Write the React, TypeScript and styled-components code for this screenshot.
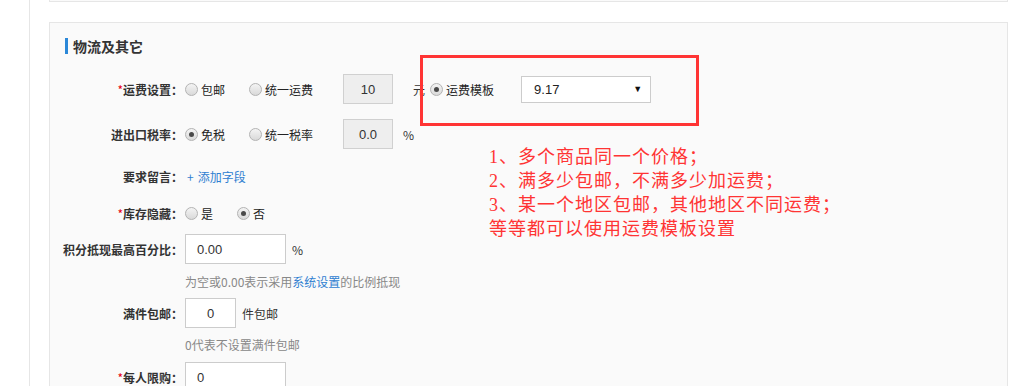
import styled, { createGlobalStyle } from 'styled-components';

const GlobalStyle = createGlobalStyle`
  html, body {
    margin: 0;
    padding: 0;
    background: #fff;
  }
  body {
    font-family: "Liberation Sans", "Noto Sans CJK SC", sans-serif;
    font-size: 12px;
    color: #333;
  }
`;

const Page = styled.div`
  position: relative;
  height: 386px;
  overflow: hidden;
  box-sizing: border-box;
  margin-left: 29px;
  border-left: 1px solid #e6e6e6;
  padding-left: 19px;
  width: 999px;
`;

const TopPanel = styled.div`
  width: 959px;
  height: 2px;
  box-sizing: border-box;
  border: 1px solid #e6e6e6;
  border-top: none;
  background: #fafafa;
`;

const Panel = styled.section`
  margin-top: 20px;
  width: 959px;
  height: 400px;
  box-sizing: border-box;
  border: 1px solid #e6e6e6;
  background: #fafafa;
  padding: 15px 0 0 15px;
`;

const Heading = styled.h3`
  margin: 0;
  height: 16px;
  line-height: 16px;
  border-left: 3px solid #2b88d8;
  padding-left: 5px;
  font-size: 14px;
  font-weight: bold;
  color: #333;
  font-family: "Noto Sans CJK SC", sans-serif;
`;

const Row = styled.div<{ $top: number }>`
  display: flex;
  align-items: center;
  min-height: 30px;
  margin-top: ${(p) => p.$top}px;
  margin-left: -15px;
`;

const Label = styled.div`
  width: 133px;
  flex: none;
  text-align: right;
  font-weight: bold;
  color: #333;
  font-family: "Noto Sans CJK SC", sans-serif;
  padding-right: 2px;
`;

const Star = styled.span`
  color: #e60012;
  font-weight: normal;
`;

const Option = styled.label<{ $after?: number; $before?: number }>`
  display: inline-flex;
  align-items: center;
  gap: 3px;
  margin-left: ${(p) => p.$before ?? 0}px;
  margin-right: ${(p) => p.$after ?? 24}px;
  color: #222;
  font-family: "Noto Sans CJK SC", sans-serif;
`;

const Radio = styled.span<{ $checked?: boolean }>`
  width: 13px;
  height: 13px;
  box-sizing: border-box;
  border-radius: 50%;
  border: 1px solid #b3b3b3;
  background: linear-gradient(#f4f4f4, #d9d9d9);
  display: inline-flex;
  align-items: center;
  justify-content: center;

  &::after {
    content: '';
    width: 5px;
    height: 5px;
    border-radius: 50%;
    background: #4a4a4a;
    display: ${(p) => (p.$checked ? 'block' : 'none')};
  }
`;

const Input = styled.div<{ $w: number; $disabled?: boolean; $center?: boolean; $before?: number }>`
  width: ${(p) => p.$w}px;
  height: 30px;
  box-sizing: border-box;
  border: 1px solid ${(p) => (p.$disabled ? '#d0d0d0' : '#cccccc')};
  background: ${(p) => (p.$disabled ? '#eeeeee' : '#fff')};
  margin-left: ${(p) => p.$before ?? 0}px;
  display: flex;
  align-items: center;
  justify-content: ${(p) => (p.$center ? 'center' : 'flex-start')};
  padding-left: ${(p) => (p.$center ? 0 : 11)}px;
  font-size: 13px;
  color: #333;
`;

const Unit = styled.span<{ $before: number }>`
  margin-left: ${(p) => p.$before}px;
  color: #333;
  font-family: "Noto Sans CJK SC", sans-serif;
`;

const Select = styled.div`
  width: 130px;
  height: 27px;
  box-sizing: border-box;
  border: 1px solid #cccccc;
  background: #fff;
  margin-left: 3px;
  display: flex;
  align-items: center;
  justify-content: space-between;
  padding: 0 8px 0 12px;
  font-size: 13px;
  color: #222;
`;

const Caret = styled.span`
  font-size: 9px;
  color: #111;
`;

const AddLink = styled.a`
  color: #2f80d1;
  text-decoration: none;
  font-family: "Noto Sans CJK SC", sans-serif;
  margin-left: 2px;
  font-size: 12px;

  b {
    font-weight: normal;
    margin-right: 4px;
  }
`;

const Help = styled.div<{ $top: number }>`
  margin-top: ${(p) => p.$top}px;
  margin-left: 120px;
  height: 16px;
  line-height: 16px;
  color: #888;
  font-family: "Noto Sans CJK SC", sans-serif;

  a {
    color: #2f80d1;
    text-decoration: none;
  }
`;

const NoteBox = styled.div`
  position: absolute;
  left: 390px;
  top: 55px;
  width: 279px;
  height: 71px;
  box-sizing: border-box;
  border: 3px solid #ff3434;
  pointer-events: none;
`;

const NoteText = styled.div`
  position: absolute;
  left: 459px;
  top: 145px;
  color: #ff3434;
  font-size: 18px;
  line-height: 24px;
  letter-spacing: 1px;
  font-family: "Liberation Serif", "Noto Sans CJK SC", serif;
  white-space: nowrap;
`;

export default function App() {
  return (
    <>
      <GlobalStyle />
      <Page>
        <TopPanel />
        <Panel>
          <Heading>物流及其它</Heading>

          <Row $top={20}>
            <Label><Star>*</Star>运费设置：</Label>
            <Option><Radio />包邮</Option>
            <Option><Radio />统一运费</Option>
            <Input $w={50} $disabled $center $before={6}>10</Input>
            <Unit $before={20}>元</Unit>
            <Option $before={5}><Radio $checked />运费模板</Option>
            <Select>
              <span>9.17</span>
              <Caret>▼</Caret>
            </Select>
          </Row>

          <Row $top={15}>
            <Label>进出口税率：</Label>
            <Option><Radio $checked />免税</Option>
            <Option><Radio />统一税率</Option>
            <Input $w={50} $disabled $center $before={6}>0.0</Input>
            <Unit $before={10}>%</Unit>
          </Row>

          <Row $top={12}>
            <Label>要求留言：</Label>
            <AddLink href="#"><b>+</b>添加字段</AddLink>
          </Row>

          <Row $top={7}>
            <Label><Star>*</Star>库存隐藏：</Label>
            <Option><Radio />是</Option>
            <Option><Radio $checked />否</Option>
          </Row>

          <Row $top={6}>
            <Label>积分抵现最高百分比：</Label>
            <Input $w={101}>0.00</Input>
            <Unit $before={6}>%</Unit>
          </Row>
          <Help $top={10}>
            为空或0.00表示采用<a href="#">系统设置</a>的比例抵现
          </Help>

          <Row $top={8}>
            <Label>满件包邮：</Label>
            <Input $w={51} $center>0</Input>
            <Unit $before={6}>件包邮</Unit>
          </Row>
          <Help $top={9}>0代表不设置满件包邮</Help>

          <Row $top={9}>
            <Label><Star>*</Star>每人限购：</Label>
            <Input $w={101}>0</Input>
          </Row>
        </Panel>

        <NoteBox />
        <NoteText>
          1、多个商品同一个价格；<br />
          2、满多少包邮，不满多少加运费；<br />
          3、某一个地区包邮，其他地区不同运费；<br />
          等等都可以使用运费模板设置
        </NoteText>
      </Page>
    </>
  );
}
